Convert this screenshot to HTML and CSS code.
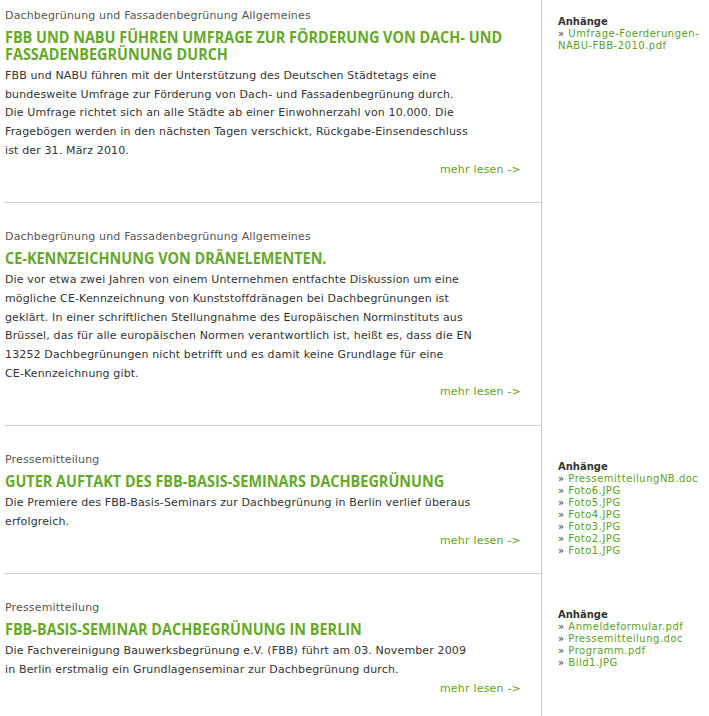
FILE: index.html
```html
<!DOCTYPE html>
<html lang="de">
<head>
<meta charset="utf-8">
<title>Aktuelles</title>
<link rel="stylesheet" href="styles.css">
</head>
<body>
<div class="page">
  <article class="news first">
    <div class="cat">Dachbegrünung und Fassadenbegrünung Allgemeines</div>
    <h2 class="title">FBB UND NABU FÜHREN UMFRAGE ZUR FÖRDERUNG VON DACH- UND<br>FASSADENBEGRÜNUNG DURCH</h2>
    <p class="text">FBB und NABU führen mit der Unterstützung des Deutschen Städtetags eine<br>bundesweite Umfrage zur Förderung von Dach- und Fassadenbegrünung durch.<br>Die Umfrage richtet sich an alle Städte ab einer Einwohnerzahl von 10.000. Die<br>Fragebögen werden in den nächsten Tagen verschickt, Rückgabe-Einsendeschluss<br>ist der 31. März 2010.</p>
    <div class="more"><a href="#">mehr lesen -&gt;</a></div>
  </article>
  <aside class="attach first">
    <div class="attach-head">Anhänge</div>
    <ul class="files">
      <li><span class="bullet">»</span> <a href="#">Umfrage-Foerderungen-</a><br><a href="#">NABU-FBB-2010.pdf</a></li>
    </ul>
  </aside>

  <article class="news">
    <div class="cat">Dachbegrünung und Fassadenbegrünung Allgemeines</div>
    <h2 class="title">CE-KENNZEICHNUNG VON DRÄNELEMENTEN.</h2>
    <p class="text">Die vor etwa zwei Jahren von einem Unternehmen entfachte Diskussion um eine<br>mögliche CE-Kennzeichnung von Kunststoffdränagen bei Dachbegrünungen ist<br>geklärt. In einer schriftlichen Stellungnahme des Europäischen Norminstituts aus<br>Brüssel, das für alle europäischen Normen verantwortlich ist, heißt es, dass die EN<br>13252 Dachbegrünungen nicht betrifft und es damit keine Grundlage für eine<br>CE-Kennzeichnung gibt.</p>
    <div class="more"><a href="#">mehr lesen -&gt;</a></div>
  </article>
  <aside class="attach"></aside>

  <article class="news">
    <div class="cat">Pressemitteilung</div>
    <h2 class="title">GUTER AUFTAKT DES FBB-BASIS-SEMINARS DACHBEGRÜNUNG</h2>
    <p class="text">Die Premiere des FBB-Basis-Seminars zur Dachbegrünung in Berlin verlief überaus<br>erfolgreich.</p>
    <div class="more"><a href="#">mehr lesen -&gt;</a></div>
  </article>
  <aside class="attach">
    <div class="attach-head">Anhänge</div>
    <ul class="files">
      <li><span class="bullet">»</span> <a href="#">PressemitteilungNB.doc</a></li>
      <li><span class="bullet">»</span> <a href="#">Foto6.JPG</a></li>
      <li><span class="bullet">»</span> <a href="#">Foto5.JPG</a></li>
      <li><span class="bullet">»</span> <a href="#">Foto4.JPG</a></li>
      <li><span class="bullet">»</span> <a href="#">Foto3.JPG</a></li>
      <li><span class="bullet">»</span> <a href="#">Foto2.JPG</a></li>
      <li><span class="bullet">»</span> <a href="#">Foto1.JPG</a></li>
    </ul>
  </aside>

  <article class="news">
    <div class="cat">Pressemitteilung</div>
    <h2 class="title">FBB-BASIS-SEMINAR DACHBEGRÜNUNG IN BERLIN</h2>
    <p class="text">Die Fachvereinigung Bauwerksbegrünung e.V. (FBB) führt am 03. November 2009<br>in Berlin erstmalig ein Grundlagenseminar zur Dachbegrünung durch.</p>
    <div class="more"><a href="#">mehr lesen -&gt;</a></div>
  </article>
  <aside class="attach">
    <div class="attach-head">Anhänge</div>
    <ul class="files">
      <li><span class="bullet">»</span> <a href="#">Anmeldeformular.pdf</a></li>
      <li><span class="bullet">»</span> <a href="#">Pressemitteilung.doc</a></li>
      <li><span class="bullet">»</span> <a href="#">Programm.pdf</a></li>
      <li><span class="bullet">»</span> <a href="#">Bild1.JPG</a></li>
    </ul>
  </aside>
</div>
</body>
</html>
```

FILE: styles.css
```css
html, body {
  margin: 0;
  padding: 0;
  background: #ffffff;
}

body {
  font-family: "DejaVu Sans", Verdana, sans-serif;
  color: #333333;
}

.page {
  display: grid;
  grid-template-columns: 536px 1fr;
  padding-left: 5px;
}

.news {
  padding: 26px 20px 23px 0;
  border-bottom: 1px solid #cccccc;
  white-space: nowrap;
}

.news.first {
  padding-top: 8px;
}

.cat {
  font-size: 11px;
  line-height: 16px;
  letter-spacing: 0.16px;
  color: #555555;
}

.title {
  margin: 4px 0 0;
  font-family: "Open Sans", "DejaVu Sans", sans-serif;
  font-weight: bold;
  font-size: 16.5px;
  line-height: 17px;
  color: #66a82a;
  transform: scaleX(0.875);
  transform-origin: left center;
}

.text {
  margin: 5px 0 0;
  font-size: 11px;
  line-height: 18.7px;
  letter-spacing: 0.14px;
  color: #333333;
}

.more {
  text-align: right;
  font-size: 11px;
  line-height: 18.7px;
  letter-spacing: 0.2px;
}

.more a {
  color: #5fa320;
  text-decoration: none;
}

.attach {
  border-left: 1px solid #c8c8c8;
  padding: 35px 4px 0 16px;
  font-size: 10px;
  line-height: 12px;
  color: #333333;
}

.attach.first {
  padding-top: 16px;
}

.attach-head {
  font-weight: bold;
  color: #333333;
}

.files {
  list-style: none;
  margin: 0;
  padding: 0;
  letter-spacing: 0.5px;
}

.bullet {
  color: #333333;
}

.files a {
  color: #5a9e1e;
  text-decoration: none;
}
```
